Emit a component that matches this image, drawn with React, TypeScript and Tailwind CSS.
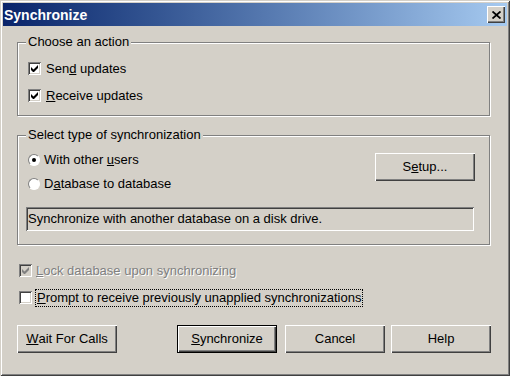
import React from "react";

const raised =
  "bg-[#d4d0c8] shadow-[inset_1px_1px_#ffffff,inset_-1px_-1px_#404040,inset_-2px_-2px_#808080]";
const sunken =
  "shadow-[inset_1px_1px_#808080,inset_-1px_-1px_#ffffff,inset_2px_2px_#404040,inset_-2px_-2px_#d4d0c8]";
const etched =
  "border border-[#808080] shadow-[inset_1px_1px_#ffffff,1px_1px_#ffffff]";

function CheckBox({ checked, disabled }: { checked?: boolean; disabled?: boolean }) {
  return (
    <span
      className={`flex w-[13px] h-[13px] shrink-0 items-center justify-center ${sunken} ${
        disabled ? "bg-[#d4d0c8]" : "bg-white"
      }`}
    >
      {checked && (
        <svg width="7" height="7" viewBox="0 0 7 7">
          <path
            d="M0 2v3l2 2h1l4-4V0L2.5 4.5z"
            fill={disabled ? "#808080" : "#000000"}
          />
        </svg>
      )}
    </span>
  );
}

function Radio({ checked }: { checked?: boolean }) {
  return (
    <span className="relative flex w-[12px] h-[12px] shrink-0 items-center justify-center rounded-full bg-white border border-t-[#808080] border-l-[#808080] border-b-white border-r-white">
      {checked && <span className="w-[4px] h-[4px] rounded-full bg-black" />}
    </span>
  );
}

function Button({
  children,
  isDefault,
  className = "",
}: {
  children: React.ReactNode;
  isDefault?: boolean;
  className?: string;
}) {
  return (
    <div
      className={`w-[100px] h-[28px] ${
        isDefault ? "border border-black" : ""
      } ${className}`}
    >
      <button
        type="button"
        className={`w-full h-full flex items-center justify-center ${raised}`}
      >
        {children}
      </button>
    </div>
  );
}

export default function App() {
  return (
    <div className="w-[510px] h-[376px] overflow-hidden flex flex-col p-[3px] bg-[#d4d0c8] text-[13px] leading-[16px] text-black font-['Liberation_Sans',Arial,sans-serif] shadow-[inset_1px_1px_#d4d0c8,inset_-1px_-1px_#404040,inset_2px_2px_#ffffff,inset_-2px_-2px_#808080]">
      {/* title bar */}
      <div className="h-[23px] flex items-center justify-between pl-[1px] pr-[2px] bg-linear-to-r from-[#0a246a] to-[#a6caf0]">
        <span className="text-white font-bold text-[14px]">Synchronize</span>
        <span className={`w-[18px] h-[17px] flex items-center justify-center ${raised}`}>
          <svg width="9" height="8" viewBox="0 0 9 8">
            <path d="M0.5 0.5l8 7M8.5 0.5l-8 7" stroke="#000" strokeWidth="1.8" />
          </svg>
        </span>
      </div>

      <div className="flex flex-col pl-[14px]">
        {/* Choose an action */}
        <fieldset className={`mt-[8px] w-[473px] h-[82px] pl-[10px] ${etched}`}>
          <legend className="-ml-[2px] px-[2px] bg-[#d4d0c8]">Choose an action</legend>
          <div className="flex flex-col pt-[5px]">
            <label className="h-[27px] flex items-center gap-[5px]">
              <CheckBox checked />
              <span>
                Sen<u>d</u> updates
              </span>
            </label>
            <label className="h-[27px] flex items-center gap-[5px]">
              <CheckBox checked />
              <span>
                <u>R</u>eceive updates
              </span>
            </label>
          </div>
        </fieldset>

        {/* Select type */}
        <fieldset className={`mt-[11px] w-[473px] h-[118px] pl-[8px] pr-[14px] ${etched}`}>
          <legend className="ml-0 px-[2px] bg-[#d4d0c8]">Select type of synchronization</legend>
          <div className="flex justify-between pt-[5px]">
            <div className="flex flex-col pl-[2px]">
              <label className="h-[24px] flex items-center gap-[4px]">
                <Radio checked />
                <span>
                  With other <u>u</u>sers
                </span>
              </label>
              <label className="h-[24px] flex items-center gap-[4px]">
                <Radio />
                <span>
                  D<u>a</u>tabase to database
                </span>
              </label>
            </div>
            <Button className="mt-[5px]">
              S<u>e</u>tup...
            </Button>
          </div>
          <div className={`mt-[11px] h-[24px] w-[448px] flex items-center pl-[2px] ${sunken}`}>
            Synchronize with another database on a disk drive.
          </div>
        </fieldset>

        {/* standalone checkboxes */}
        <div className="flex flex-col mt-[12px] pl-[2px]">
          <label className="h-[27px] flex items-center gap-[4px]">
            <CheckBox checked disabled />
            <span className="text-[#808080] [text-shadow:1px_1px_#ffffff]">
              <u>L</u>ock database upon synchronizing
            </span>
          </label>
          <label className="h-[27px] flex items-center gap-[4px]">
            <CheckBox />
            <span className="outline outline-1 outline-dotted outline-black px-[1px]">
              <u>P</u>rompt to receive previously unapplied synchronizations
            </span>
          </label>
        </div>

        {/* buttons */}
        <div className="flex mt-[14px]">
          <Button>
            <u>W</u>ait For Calls
          </Button>
          <Button isDefault className="ml-[60px]">
            <u>S</u>ynchronize
          </Button>
          <Button className="ml-[8px]">Cancel</Button>
          <Button className="ml-[6px]">Help</Button>
        </div>
      </div>
    </div>
  );
}
